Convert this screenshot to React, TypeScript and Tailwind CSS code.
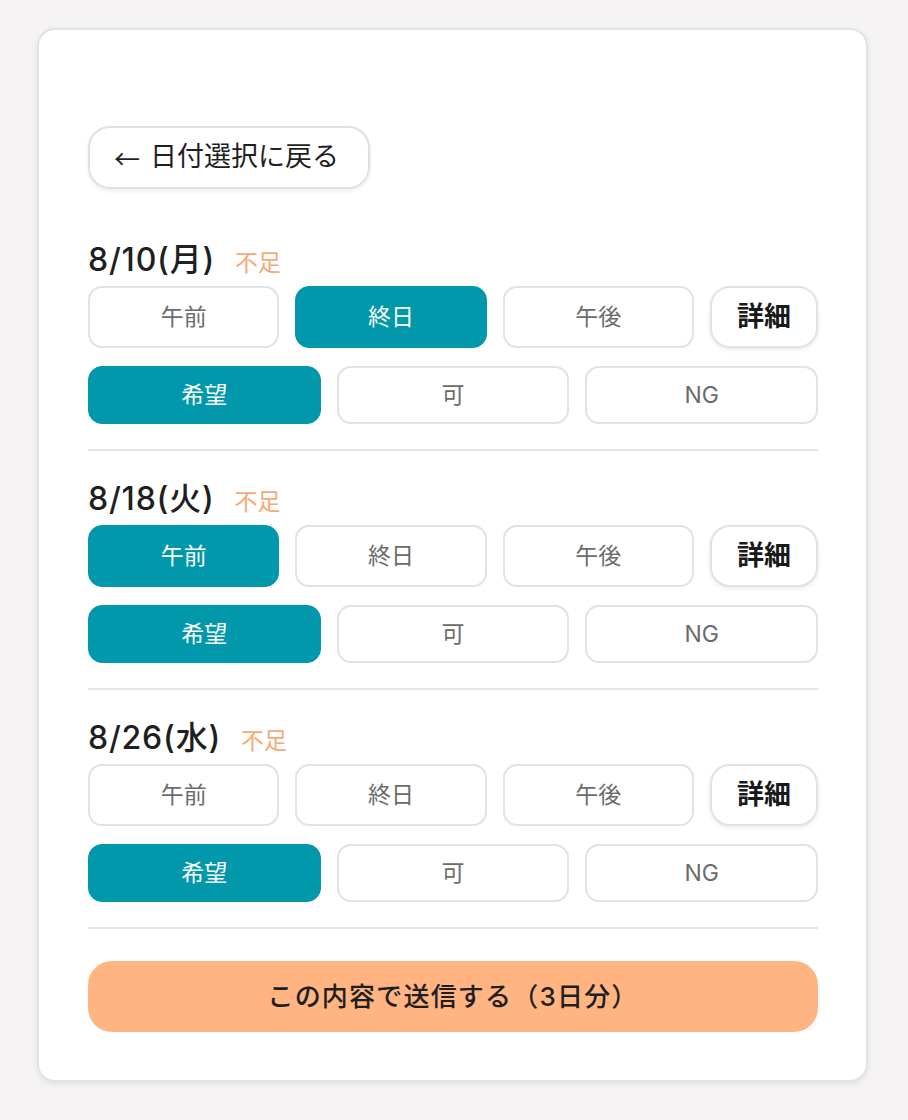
import { useState } from 'react';

type Slot = '午前' | '終日' | '午後';
type Pref = '希望' | '可' | 'NG';

const FONT = "font-['Inter','Noto_Sans_CJK_JP',sans-serif]";

const days = [
    { label: '8/10(月)', slot: '終日' as Slot, pref: '希望' as Pref },
    { label: '8/18(火)', slot: '午前' as Slot, pref: '希望' as Pref },
    { label: '8/26(水)', slot: null, pref: '希望' as Pref },
];

function Choice({ active, children, onClick }: { active: boolean; children: React.ReactNode; onClick: () => void }) {
    return (
        <button
            onClick={onClick}
            className={
                active
                    ? 'rounded-[14px] bg-[#0098aa] border border-[#0098aa] text-white text-[23px]'
                    : 'rounded-[14px] bg-white border-2 border-[#e2e2e2] text-[#6b6b6b] text-[23px]'
            }
        >
            {children}
        </button>
    );
}

function DaySection({ label, slot: initSlot, pref: initPref }: { label: string; slot: Slot | null; pref: Pref }) {
    const [slot, setSlot] = useState<Slot | null>(initSlot);
    const [pref, setPref] = useState<Pref>(initPref);

    return (
        <div className="border-b-2 border-[#e4e4e4] pt-[30px] pb-[25px] first:pt-0">
            <div className="flex items-baseline gap-[20px] h-[36px] mb-[8px]">
                <h3 className="text-[32px] leading-[36px] font-medium text-[#1f1f1f] tracking-[0.8px]">{label}</h3>
                <span className="text-[23px] text-[#f7a876]">不足</span>
            </div>
            <div className="grid grid-cols-[1fr_1fr_1fr_108px] gap-[16px] h-[62px]">
                {(['午前', '終日', '午後'] as Slot[]).map((s) => (
                    <Choice key={s} active={slot === s} onClick={() => setSlot(s)}>
                        {s}
                    </Choice>
                ))}
                <button className="rounded-[20px] bg-white border-2 border-[#e2e2e2] text-[27px] font-bold text-[#1a1a1a] shadow-[0_2px_4px_rgba(0,0,0,0.08)]">
                    詳細
                </button>
            </div>
            <div className="grid grid-cols-3 gap-[16px] h-[58px] mt-[18px]">
                {(['希望', '可', 'NG'] as Pref[]).map((p) => (
                    <Choice key={p} active={pref === p} onClick={() => setPref(p)}>
                        {p}
                    </Choice>
                ))}
            </div>
        </div>
    );
}

export default function App() {
    return (
        <div className={`min-h-[1120px] bg-[#f5f3f4] pt-[28px] pl-[37px] pr-[40px] pb-[40px] ${FONT}`}>
            <div className="bg-white border-2 border-[#e3e3e3] rounded-[18px] shadow-[0_2px_6px_rgba(0,0,0,0.08)] pt-[96px] pb-[48px] pl-[49px] pr-[48px]">
                <button className="h-[63px] pl-[24px] pr-[29px] rounded-[22px] bg-white border-2 border-[#e0e0e0] shadow-[0_2px_4px_rgba(0,0,0,0.08)] text-[27px] text-[#1f1f1f] flex items-center gap-[10px]">
                    <span className="font-['Noto_Sans_CJK_JP',sans-serif] text-[26px]">←</span>
                    <span>日付選択に戻る</span>
                </button>

                <div className="mt-[53px]">
                    {days.map((d) => (
                        <DaySection key={d.label} label={d.label} slot={d.slot} pref={d.pref} />
                    ))}
                </div>

                <button className="mt-[32px] w-full h-[71px] rounded-[24px] bg-[#ffb482] text-[26px] font-medium tracking-[1.2px] text-[#1f1f1f]">
                    この内容で送信する（3日分）
                </button>
            </div>
        </div>
    );
}
